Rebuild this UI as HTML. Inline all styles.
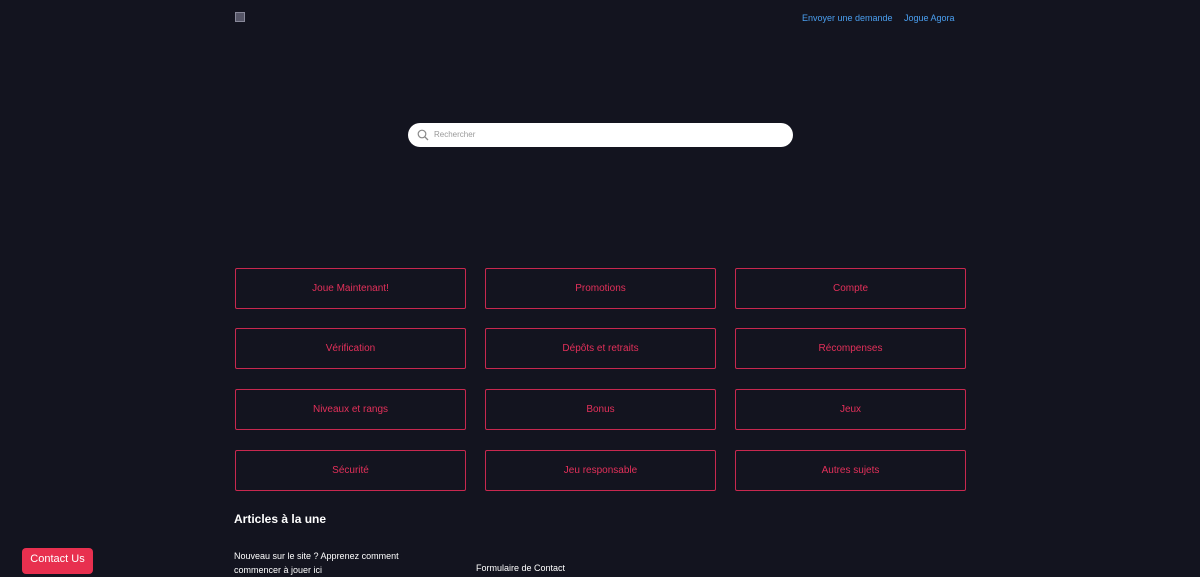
<!DOCTYPE html>
<html><head><meta charset="utf-8"><style>
*{margin:0;padding:0;box-sizing:border-box}
body{width:1200px;height:570px;overflow:hidden;background:#13141f;font-family:"Liberation Sans","DejaVu Sans",sans-serif;position:relative}
.a{position:absolute}
.nav{top:13px;font-size:9px;color:#4a9ff0}
.search{left:408px;top:123px;width:385px;height:24px;background:#fff;border-radius:12px}
.search span{position:absolute;left:26px;top:7px;font-size:8px;color:#999}
.box{position:absolute;width:231px;height:41px;border:1.5px solid #c8284f;border-radius:2px;color:#e3305a;font-size:10px;display:flex;align-items:center;justify-content:center}
.contact{left:22px;top:548px;width:71px;height:26px;background:#e8304f;color:#fff;font-size:11px;border-radius:4px;text-align:center;line-height:23px}
.t{color:#fff;font-size:9px}
</style></head><body>
<div class="a" style="left:235px;top:12px;width:10px;height:10px;border:1px solid #889;background:#556"></div>
<div class="a nav" style="left:802px">Envoyer une demande</div>
<div class="a nav" style="left:904px">Jogue Agora</div>
<div class="a search">
<svg style="position:absolute;left:9px;top:6px" width="12" height="12" viewBox="0 0 12 12"><circle cx="5" cy="5" r="3.8" fill="none" stroke="#888" stroke-width="1.2"/><line x1="7.8" y1="7.8" x2="11" y2="11" stroke="#888" stroke-width="1.3"/></svg>
<span>Rechercher</span></div>
<div class="box" style="left:235px;top:268px">Joue Maintenant!</div>
<div class="box" style="left:485px;top:268px">Promotions</div>
<div class="box" style="left:735px;top:268px">Compte</div>
<div class="box" style="left:235px;top:328px">Vérification</div>
<div class="box" style="left:485px;top:328px">Dépôts et retraits</div>
<div class="box" style="left:735px;top:328px">Récompenses</div>
<div class="box" style="left:235px;top:389px">Niveaux et rangs</div>
<div class="box" style="left:485px;top:389px">Bonus</div>
<div class="box" style="left:735px;top:389px">Jeux</div>
<div class="box" style="left:235px;top:450px">Sécurité</div>
<div class="box" style="left:485px;top:450px">Jeu responsable</div>
<div class="box" style="left:735px;top:450px">Autres sujets</div>
<div class="a t" style="left:234px;top:512px;font-size:12px;font-weight:bold">Articles à la une</div>
<div class="a t" style="left:234px;top:549px;line-height:14px;width:190px">Nouveau sur le site ? Apprenez comment commencer à jouer ici</div>
<div class="a t" style="left:476px;top:563px">Formulaire de Contact</div>
<div class="a contact">Contact Us</div>
</body></html>
